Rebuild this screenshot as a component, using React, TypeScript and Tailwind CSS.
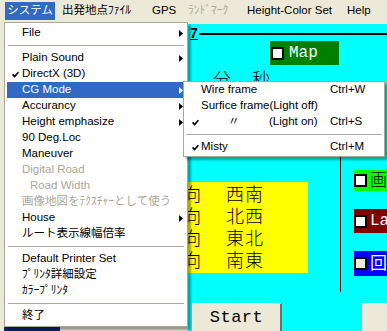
import React from "react";

const FONT = "font-['Liberation_Sans','Noto_Sans_CJK_JP',sans-serif]";

function Check({ white }: { white?: boolean }) {
  return (
    <svg width="7" height="7" viewBox="0 0 7 7">
      <polyline points="0.6,3.4 2.6,5.6 6.4,1.2" fill="none" stroke={white ? "#fff" : "#000"} strokeWidth="1.6" />
    </svg>
  );
}

function Arrow({ white }: { white?: boolean }) {
  return (
    <svg width="4" height="7" viewBox="0 0 4 7">
      <polygon points="0,0 4,3.5 0,7" fill={white ? "#fff" : "#000"} />
    </svg>
  );
}

type ItemProps = {
  label: React.ReactNode;
  checked?: boolean;
  arrow?: boolean;
  disabled?: boolean;
  active?: boolean;
  indent?: boolean;
};

function Item({ label, checked, arrow, disabled, active, indent }: ItemProps) {
  return (
    <div className={active ? "h-[16px] flex items-center bg-[#316AC5] text-white" : disabled ? "h-[16px] flex items-center text-[#ACA899]" : "h-[16px] flex items-center text-black"}>
      <span className="w-[15px] pl-[5px] flex items-center">{checked ? <Check white={active} /> : null}</span>
      <span className={indent ? "flex-1 pl-[8px] whitespace-nowrap" : "flex-1 whitespace-nowrap"}>{label}</span>
      {arrow ? (
        <span className="mr-[2px] flex items-center">
          <Arrow white={active} />
        </span>
      ) : null}
    </div>
  );
}

function Sep() {
  return (
    <div className="h-[9px] flex items-center px-[1px]">
      <div className="h-px w-full bg-[#ACA899]" />
    </div>
  );
}

function SubItem({ label, checked, shortcut }: { label: React.ReactNode; checked?: boolean; shortcut?: string }) {
  return (
    <div className="h-[16px] flex items-center text-black whitespace-nowrap">
      <span className="w-[15px] pl-[6px] flex items-center">{checked ? <Check /> : null}</span>
      <span className="w-[129px] flex">{label}</span>
      <span>{shortcut}</span>
    </div>
  );
}

function Box({ bg, children, light }: { bg: string; children?: React.ReactNode; light?: boolean }) {
  return (
    <div className={`${bg} flex items-center w-[33px] h-full overflow-hidden`}>
      <div className={light ? "shrink-0 w-[13px] h-[13px] border-[2px] border-black bg-[#ECE9D8]" : "shrink-0 w-[13px] h-[13px] border-[2px] border-black bg-white"} />
      <div className="ml-[3px]">{children}</div>
    </div>
  );
}

export default function App() {
  return (
    <div className={`w-[387px] h-[331px] relative overflow-hidden bg-[#ECE9D8] flex flex-col text-[11.5px] ${FONT}`}>
      {/* Menu bar */}
      <div className="h-[22px] flex items-center pl-[5px] shrink-0 text-black whitespace-nowrap">
        <div className="w-[50px] h-[18px] bg-[#316AC5] text-white flex items-center justify-center">システム</div>
        <div className="w-[90px] h-[18px] flex items-center pl-[7px]">出発地点ﾌｧｲﾙ</div>
        <div className="w-[36px] h-[18px] flex items-center pl-[7px]">GPS</div>
        <div className="w-[59px] h-[18px] flex items-center pl-[7px] text-[#ACA899]">ﾗﾝﾄﾞﾏｰｸ</div>
        <div className="w-[100px] h-[18px] flex items-center pl-[7px]">Height-Color Set</div>
        <div className="w-[37px] h-[18px] flex items-center pl-[7px]">Help</div>
      </div>

      {/* Body */}
      <div className="flex-1 flex min-h-0">
        <div className="w-[188px] flex flex-col justify-end">
          <div className="ml-[4px] w-[56px] h-[5px] bg-[#0A246A]" />
        </div>
        <div className="flex-1 mt-[2px] bg-[#00FFFF] flex flex-col min-w-0">
          {/* heading row */}
          <div className="h-[17px] flex items-start shrink-0">
            <span className="ml-[2px] mt-[2px] text-[14px] leading-[14px] font-bold underline text-black">7</span>
            <div className="flex-1 mt-[9px] h-[2px] bg-black ml-[1px]" />
          </div>
          {/* Map */}
          <div className="ml-[82px] w-[69px] h-[24px] bg-[#008000] flex items-center shrink-0">
            <div className="ml-[1px] w-[13px] h-[13px] border-[2px] border-black bg-white" />
            <span className="ml-[5px] text-white text-[16px] font-['Liberation_Mono',monospace]">Map</span>
          </div>
          {/* 分 秒 (clipped by the submenu) */}
          <div className="mt-[2px] h-[14px] overflow-hidden flex items-start shrink-0 text-[18px] leading-[22px] text-black font-['Noto_Sans_CJK_JP',sans-serif] font-light">
            <span className="ml-[25px]">分</span>
            <span className="ml-[21px]">秒</span>
          </div>
          {/* middle */}
          <div className="flex items-start flex-1 min-h-0">
            <div className="w-[152px] flex flex-col">
              <div className="mt-[101px] w-[120px] h-[91px] overflow-hidden bg-[#FFFF00] flex flex-col text-[18px] leading-[22px] text-black font-['Noto_Sans_CJK_JP',sans-serif] font-light">
                {["西南", "北西", "東北", "南東"].map((d) => (
                  <div key={d} className="h-[22px] flex items-center">
                    <span className="-ml-[5px] w-[18px] shrink-0">向</span>
                    <span className="ml-[25px] tracking-[1px]">{d}</span>
                  </div>
                ))}
              </div>
            </div>
            <div className="mt-[69px] w-px h-[142px] bg-black" />
            <div className="ml-[13px] flex flex-col">
              <div className="mt-[89px] h-[21px]">
                <Box bg="bg-[#00FF00]">
                  <span className="text-[17px] leading-[17px] text-black font-['Noto_Sans_CJK_JP',sans-serif] font-light">画</span>
                </Box>
              </div>
              <div className="mt-[18px] h-[24px]">
                <Box bg="bg-[#800000]">
                  <span className="text-[16px] text-white font-['Liberation_Mono',monospace]">La</span>
                </Box>
              </div>
              <div className="mt-[18px] h-[25px]">
                <Box bg="bg-[#0000FF]" light>
                  <span className="text-[17px] leading-[17px] text-white font-['Noto_Sans_CJK_JP',sans-serif]">回</span>
                </Box>
              </div>
            </div>
          </div>
          {/* bottom buttons */}
          <div className="h-[28px] flex shrink-0">
            <div className="ml-[4px] w-[90px] h-[28px] bg-[#ECE9D8] border-t border-l border-white border-r-[2px] border-r-[#716F64] flex items-center justify-center">
              <span className="text-[17px] text-black font-['Liberation_Mono',monospace] tracking-[0.5px]">Start</span>
            </div>
            <div className="ml-auto w-[25px] h-[28px] bg-[#ECE9D8] border-t border-l border-white" />
          </div>
        </div>
      </div>

      {/* Dropdown menu */}
      <div className="absolute left-[4px] top-[22px] w-[184px] h-[305px] bg-white border border-[#ACA899] px-[2px] pt-[2px] shadow-[3px_3px_2px_rgba(0,0,0,0.35)]">
        <Item label="File" arrow />
        <Sep />
        <Item label="Plain Sound" arrow />
        <Item label="DirectX (3D)" checked />
        <Item label="CG Mode" arrow active />
        <Item label="Accurancy" arrow />
        <Item label="Height emphasize" arrow />
        <Item label="90 Deg.Loc" />
        <Item label="Maneuver" />
        <Item label="Digital Road" disabled />
        <Item label="Road Width" disabled indent />
        <Item label="画像地図をﾃｸｽﾁｬｰとして使う" disabled />
        <Item label="House" arrow />
        <Item label="ルート表示線幅倍率" />
        <Sep />
        <Item label="Default Printer Set" />
        <Item label="ﾌﾟﾘﾝﾀ詳細設定" />
        <Item label="ｶﾗｰﾌﾟﾘﾝﾀ" />
        <Sep />
        <Item label="終了" />
      </div>

      {/* Submenu */}
      <div className="absolute left-[183px] top-[81px] w-[202px] h-[76px] bg-white border border-[#ACA899] px-[2px] shadow-[3px_3px_2px_rgba(0,0,0,0.35)]">
        <SubItem label="Wire frame" shortcut="Ctrl+W" />
        <SubItem label="Surfice frame(Light off)" />
        <SubItem
          checked
          label={
            <>
              <span className="pl-[27px] w-[68px]">〃</span>
              <span>(Light on)</span>
            </>
          }
          shortcut="Ctrl+S"
        />
        <div className="h-[9px] flex items-center">
          <div className="h-px w-full bg-[#ACA899]" />
        </div>
        <SubItem checked label="Misty" shortcut="Ctrl+M" />
      </div>
    </div>
  );
}
